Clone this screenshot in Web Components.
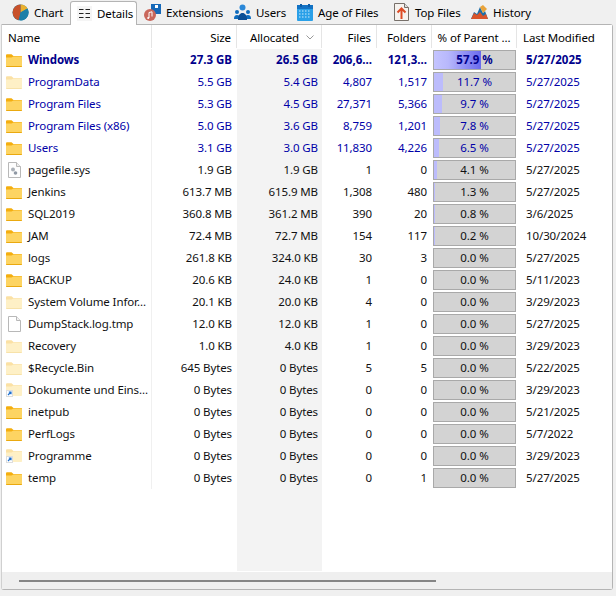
<!DOCTYPE html>
<html>
<head>
<meta charset="utf-8">
<title>Details</title>
<style>
  html, body { margin: 0; padding: 0; background: #f0f0f0; }
  body { font: 11.5px "Noto Sans", sans-serif; letter-spacing: -0.1px; color: #000; overflow: hidden; }
</style>
</head>
<body>
<disk-window></disk-window>

<script>
const ICONS = {
	chart: `<svg width="17" height="17" viewBox="0 0 17 17"><circle cx="8.5" cy="8.5" r="8" fill="#1b7fa8"/><path d="M8.5 8.5V.5a8 8 0 0 1 7 4z" fill="#eab02d"/><path d="M8.5 8.5V.5a8 8 0 0 0-2 15.7z" fill="#c8512a"/><path d="M8.5 8.5l7-4a8 8 0 0 1-7 12z" fill="#1b7fa8"/></svg>`,
	details: `<svg width="13" height="15" viewBox="0 0 13 15" fill="none" stroke="#222" stroke-width="1"><path d="M1 3.500h4.500M1 7.500h4.500M1 11.500h4.500M7.500 3.500h4.500M7.500 7.500h4.500M7.500 11.500h4.500"/></svg>`,
	extensions: `<svg width="17" height="17" viewBox="0 0 17 17"><rect x="7" y="0" width="10" height="10" fill="#1769b8"/><rect x="11" y="1" width="3" height="3" fill="#fff"/><circle cx="6" cy="11" r="6" fill="#c9675c"/><path d="M5 14V8.500l3-.7v4.700" fill="none" stroke="#fff" stroke-width="1"/><circle cx="4.200" cy="14" r="1" fill="#fff"/></svg>`,
	users: `<svg width="17" height="17" viewBox="0 0 17 17" fill="#0f6cbd"><circle cx="8.500" cy="3.500" r="3" fill="#2b88d8"/><circle cx="3" cy="8" r="2"/><circle cx="14" cy="8" r="2"/><path d="M0 15c0-3 1-4 3-4s3 1 3 4zM11 15c0-3 1-4 3-4s3 1 3 4z"/><path d="M4 16c0-5 2-7 4.500-7S13 11 13 16z" fill="#0b4f96"/></svg>`,
	age: `<svg width="16" height="17" viewBox="0 0 16 17"><rect x="0" y="1" width="16" height="16" rx="1" fill="#2aa0e8"/><rect x="0" y="1" width="16" height="4" fill="#1272c4"/><rect x="3" y="0" width="2" height="3" fill="#0c5ca6"/><rect x="11" y="0" width="2" height="3" fill="#0c5ca6"/><path d="M2 7h12M2 10h12M2 13h12" stroke="#cdeafc" stroke-width="1" stroke-dasharray="1.500 1.500"/></svg>`,
	top: `<svg width="15" height="18" viewBox="0 0 15 18"><path d="M.5.5h10l4 4v13H.5z" fill="#f6f2ee" stroke="#77706a"/><path d="M10.500.5v4h4" fill="#ddd" stroke="#77706a"/><path d="M7.500 16V6M3.500 9.500l4-4 4 4" fill="none" stroke="#dd4a24" stroke-width="2"/></svg>`,
	history: `<svg width="17" height="15" viewBox="0 0 17 15"><path d="M0 14 L3 7 L6 9 L9 2 L12 8 L14 6 L17 14z" fill="#1e6ea8"/><path d="M0 14 L3 8 L6 10 L9 7 L12 11 L15 9 L17 14z" fill="#d9542a"/><path d="M9 2 L12 0 L16 4 L14 6 L12 8z" fill="#e8a33a"/></svg>`,
	folder: `<svg width="16" height="13" viewBox="0 0 16 13"><path d="M0 1.500C0 .700.500.300 1.200.300H5.500L7.500 2H15c.600 0 1 .400 1 1v2H0z" fill="#f4ae0f"/><path d="M0 3.500h5.500L7.500 2.500H15c.600 0 1 .400 1 1V12c0 .600-.400 1-1 1H1c-.600 0-1-.400-1-1z" fill="#fdd462"/><path d="M0 12h16v.200c0 .500-.400.800-1 .800H1c-.600 0-1-.300-1-.800z" fill="#eaa90f"/></svg>`,
	faded: `<svg width="16" height="13" viewBox="0 0 16 13"><path d="M0 1.500C0 .700.500.300 1.200.300H5.500L7.500 2H15c.600 0 1 .400 1 1v2H0z" fill="#fbe1a4"/><path d="M0 3.500h5.500L7.500 2.500H15c.600 0 1 .400 1 1V12c0 .600-.400 1-1 1H1c-.600 0-1-.400-1-1z" fill="#fef0c6"/><path d="M0 12.300h16c0 .400-.400.700-1 .700H1c-.600 0-1-.300-1-.700z" fill="#f5dda0"/></svg>`,
	link: `<svg width="16" height="14" viewBox="0 0 16 14"><path d="M0 1.500C0 .700.500.300 1.200.300H5.500L7.500 2H15c.600 0 1 .400 1 1v2H0z" fill="#fbe1a4"/><path d="M0 3.500h5.500L7.500 2.500H15c.600 0 1 .400 1 1V12c0 .600-.400 1-1 1H1c-.600 0-1-.400-1-1z" fill="#fef0c6"/><rect x=".5" y="7.500" width="6" height="6" fill="#fff" stroke="#ddd"/><path d="M2 12l2.500-2.500M2.800 9h2.200v2.200" fill="none" stroke="#1c6fd0" stroke-width="1.200"/></svg>`,
	sys: `<svg width="13" height="16" viewBox="0 0 13 16"><path d="M.5.500h8l4 4v11H.5z" fill="#fdfdfd" stroke="#b8b8b8"/><path d="M8.500.500v4h4" fill="#eee" stroke="#b8b8b8"/><circle cx="5" cy="7.500" r="2" fill="#aab0b8"/><circle cx="7.500" cy="11" r="1.800" fill="#8f98a4"/></svg>`,
	file: `<svg width="13" height="16" viewBox="0 0 13 16"><path d="M.5.500h8l4 4v11H.5z" fill="#fff" stroke="#b8b8b8"/><path d="M8.500.500v4h4" fill="#f2f2f2" stroke="#b8b8b8"/></svg>`,
};

const TABS = [
	["chart", "Chart", 70],
	["details", "Details", 67, true],
	["extensions", "Extensions", 90],
	["users", "Users", 62],
	["age", "Age of Files", 97],
	["top", "Top Files", 78],
	["history", "History", 70],
];

// name, size, allocated, files, folders, percent, date, icon
const ROWS = [
	["Windows", "27.3 GB", "26.5 GB", "206,6...", "121,3...", 57.9, "5/27/2025", "folder", "top"],
	["ProgramData", "5.5 GB", "5.4 GB", "4,807", "1,517", 11.7, "5/27/2025", "faded", "blue"],
	["Program Files", "5.3 GB", "4.5 GB", "27,371", "5,366", 9.7, "5/27/2025", "folder", "blue"],
	["Program Files (x86)", "5.0 GB", "3.6 GB", "8,759", "1,201", 7.8, "5/27/2025", "folder", "blue"],
	["Users", "3.1 GB", "3.0 GB", "11,830", "4,226", 6.5, "5/27/2025", "folder", "blue"],
	["pagefile.sys", "1.9 GB", "1.9 GB", "1", "0", 4.1, "5/27/2025", "sys"],
	["Jenkins", "613.7 MB", "615.9 MB", "1,308", "480", 1.3, "5/27/2025", "folder"],
	["SQL2019", "360.8 MB", "361.2 MB", "390", "20", 0.8, "3/6/2025", "folder"],
	["JAM", "72.4 MB", "72.7 MB", "154", "117", 0.2, "10/30/2024", "folder"],
	["logs", "261.8 KB", "324.0 KB", "30", "3", 0, "5/27/2025", "folder"],
	["BACKUP", "20.6 KB", "24.0 KB", "1", "0", 0, "5/11/2023", "folder"],
	["System Volume Infor...", "20.1 KB", "20.0 KB", "4", "0", 0, "3/29/2023", "faded"],
	["DumpStack.log.tmp", "12.0 KB", "12.0 KB", "1", "0", 0, "5/27/2025", "file"],
	["Recovery", "1.0 KB", "4.0 KB", "1", "0", 0, "3/29/2023", "faded"],
	["$Recycle.Bin", "645 Bytes", "0 Bytes", "5", "5", 0, "5/22/2025", "faded"],
	["Dokumente und Eins...", "0 Bytes", "0 Bytes", "0", "0", 0, "3/29/2023", "link"],
	["inetpub", "0 Bytes", "0 Bytes", "0", "0", 0, "5/21/2025", "folder"],
	["PerfLogs", "0 Bytes", "0 Bytes", "0", "0", 0, "5/7/2022", "folder"],
	["Programme", "0 Bytes", "0 Bytes", "0", "0", 0, "3/29/2023", "link"],
	["temp", "0 Bytes", "0 Bytes", "0", "1", 0, "5/27/2025", "folder"],
];

const COLUMNS = "150px 85px 85px 55px 55px 85px 1fr";

class TabItem extends HTMLElement {
	connectedCallback() {
		const icon = ICONS[this.getAttribute("icon")];
		this.attachShadow({ mode: "open" }).innerHTML = `
		<style>
			:host { display: flex; align-items: center; gap: 5px; height: 24px; box-sizing: border-box; padding-left: 7px; white-space: nowrap; }
			:host(:first-child) { padding-left: 12px; }
			:host([active]) { height: 24px; margin-top: 1px; background: #fff; border: 1px solid #b4b4b4; border-bottom: none; border-radius: 3px 3px 0 0; position: relative; padding-left: 6px; margin-bottom: -2px; padding-bottom: 1px; }
			.icon { display: flex; width: 17px; justify-content: center; }
			:host([active]) .icon { width: 15px; background: #f5f5f5; }
		</style>
		<span class="icon">${icon}</span><slot></slot>`;
	}
}

class TabStrip extends HTMLElement {
	connectedCallback() {
		this.attachShadow({ mode: "open" }).innerHTML = `
		<style>
			:host { display: flex; align-items: flex-start; height: 24px; flex: none; position: relative; z-index: 1; }
		</style>
		<slot></slot>`;
		for (const [icon, label, width, active] of TABS) {
			const tab = document.createElement("tab-item");
			tab.setAttribute("icon", icon);
			tab.style.width = width + "px";
			tab.textContent = label;
			if (active) tab.setAttribute("active", "");
			this.appendChild(tab);
		}
	}
}

class ListHeader extends HTMLElement {
	connectedCallback() {
		this.attachShadow({ mode: "open" }).innerHTML = `
		<style>
			:host { display: grid; grid-template-columns: ${COLUMNS}; height: 24px; flex: none; background: #fff; }
			div { display: flex; align-items: center; justify-content: flex-end; padding: 1px 5px 0 0; border-right: 1px solid #e5e5e5; margin-bottom: 1px; white-space: nowrap; }
			.name { justify-content: flex-start; padding-left: 6px; }
			.alloc { justify-content: flex-start; padding-left: 13px; padding-right: 0; gap: 7px; }
			.pct { justify-content: center; padding-right: 0; }
			.mod { justify-content: flex-start; padding-left: 6px; border-right: none; }
		</style>
		<div class="name">Name</div>
		<div>Size</div>
		<div class="alloc">Allocated <svg width="8" height="5" viewBox="0 0 8 5" fill="none" stroke="#999"><path d="M.5.500L4 4 7.500.500"/></svg></div>
		<div>Files</div>
		<div>Folders</div>
		<div class="pct">% of Parent ...</div>
		<div class="mod">Last Modified</div>`;
	}
}

class PercentBar extends HTMLElement {
	connectedCallback() {
		const value = Number(this.getAttribute("value"));
		this.attachShadow({ mode: "open" }).innerHTML = `
		<style>
			:host { display: flex; align-items: center; justify-content: center; position: relative; box-sizing: border-box; height: 20px; margin: 0 1px; background: #d3d3d3; border: 1px solid #a9a9a9; overflow: hidden; }
			.fill { position: absolute; left: 0; top: 0; bottom: 0; background: linear-gradient(90deg, #c4c4ff, #b8b8fc 30%, #6a6aee); }
			.small { background: #bcbcfc; }
			span { position: relative; margin-top: -1px; }
		</style>
		<div class="fill ${value < 20 ? "small" : ""}" style="width:${value}%"></div>
		<span>${value.toFixed(1)} %</span>`;
	}
}

class ListRow extends HTMLElement {
	connectedCallback() {
		const [name, size, alloc, files, folders, pct, date, icon] = this.data;
		this.attachShadow({ mode: "open" }).innerHTML = `
		<style>
			:host { display: grid; grid-template-columns: ${COLUMNS}; height: 22px; align-items: center; white-space: nowrap; color: #111; }
			:host([tone="blue"]) { color: #0000a8; }
			:host([tone="top"]) { color: #00008c; font-weight: 700; letter-spacing: 0; }
			.cell-name { display: flex; align-items: center; height: 22px; border-right: 1px solid #f0f0f0; box-sizing: border-box; overflow: hidden; }
			.label { margin-top: -1px; letter-spacing: -0.1px; }
			.icon { display: flex; width: 16px; margin: 0 6px 0 4px; justify-content: center; }
			.num { text-align: right; padding: 0 5px 1px 0; }
			.alloc { padding-right: 4px; }
			.date { padding: 0 0 1px 9px; }
		</style>
		<div class="cell-name"><span class="icon">${ICONS[icon]}</span><span class="label">${name}</span></div>
		<div class="num">${size}</div>
		<div class="num alloc">${alloc}</div>
		<div class="num">${files}</div>
		<div class="num">${folders}</div>
		<percent-bar value="${pct}"></percent-bar>
		<div class="date">${date}</div>`;
	}
}

class ListBody extends HTMLElement {
	connectedCallback() {
		this.attachShadow({ mode: "open" }).innerHTML = `
		<style>
			:host { display: block; flex: 1; background: linear-gradient(#f3f3f3, #f3f3f3) 235px 0 / 85px 100% no-repeat; }
		</style>
		<slot></slot>`;
		for (const row of ROWS) {
			const el = document.createElement("list-row");
			el.data = row;
			if (row[8]) el.setAttribute("tone", row[8]);
			this.appendChild(el);
		}
	}
}

class ScrollBar extends HTMLElement {
	connectedCallback() {
		this.attachShadow({ mode: "open" }).innerHTML = `
		<style>
			:host { display: flex; align-items: center; height: 17px; flex: none; margin-top: 1px; padding-left: 17px; background: #efefef; }
			div { width: 417px; height: 2px; background: #858585; }
		</style>
		<div></div>`;
	}
}

class DiskWindow extends HTMLElement {
	connectedCallback() {
		this.attachShadow({ mode: "open" }).innerHTML = `
		<style>
			:host { display: flex; flex-direction: column; width: 616px; height: 596px; box-sizing: border-box; padding-bottom: 6px; }
			.panel { flex: 1; display: flex; flex-direction: column; margin: 0 3px 0 1px; background: #fff; border: 1px solid #b4b4b4; border-left-color: #d0d0d0; border-radius: 0 3px 3px 3px; min-height: 0; }
		</style>
		<tab-strip></tab-strip>
		<div class="panel">
			<list-header></list-header>
			<list-body></list-body>
			<scroll-bar></scroll-bar>
		</div>`;
	}
}

customElements.define("tab-item", TabItem);
customElements.define("tab-strip", TabStrip);
customElements.define("list-header", ListHeader);
customElements.define("percent-bar", PercentBar);
customElements.define("list-row", ListRow);
customElements.define("list-body", ListBody);
customElements.define("scroll-bar", ScrollBar);
customElements.define("disk-window", DiskWindow);
</script>
</body>
</html>
